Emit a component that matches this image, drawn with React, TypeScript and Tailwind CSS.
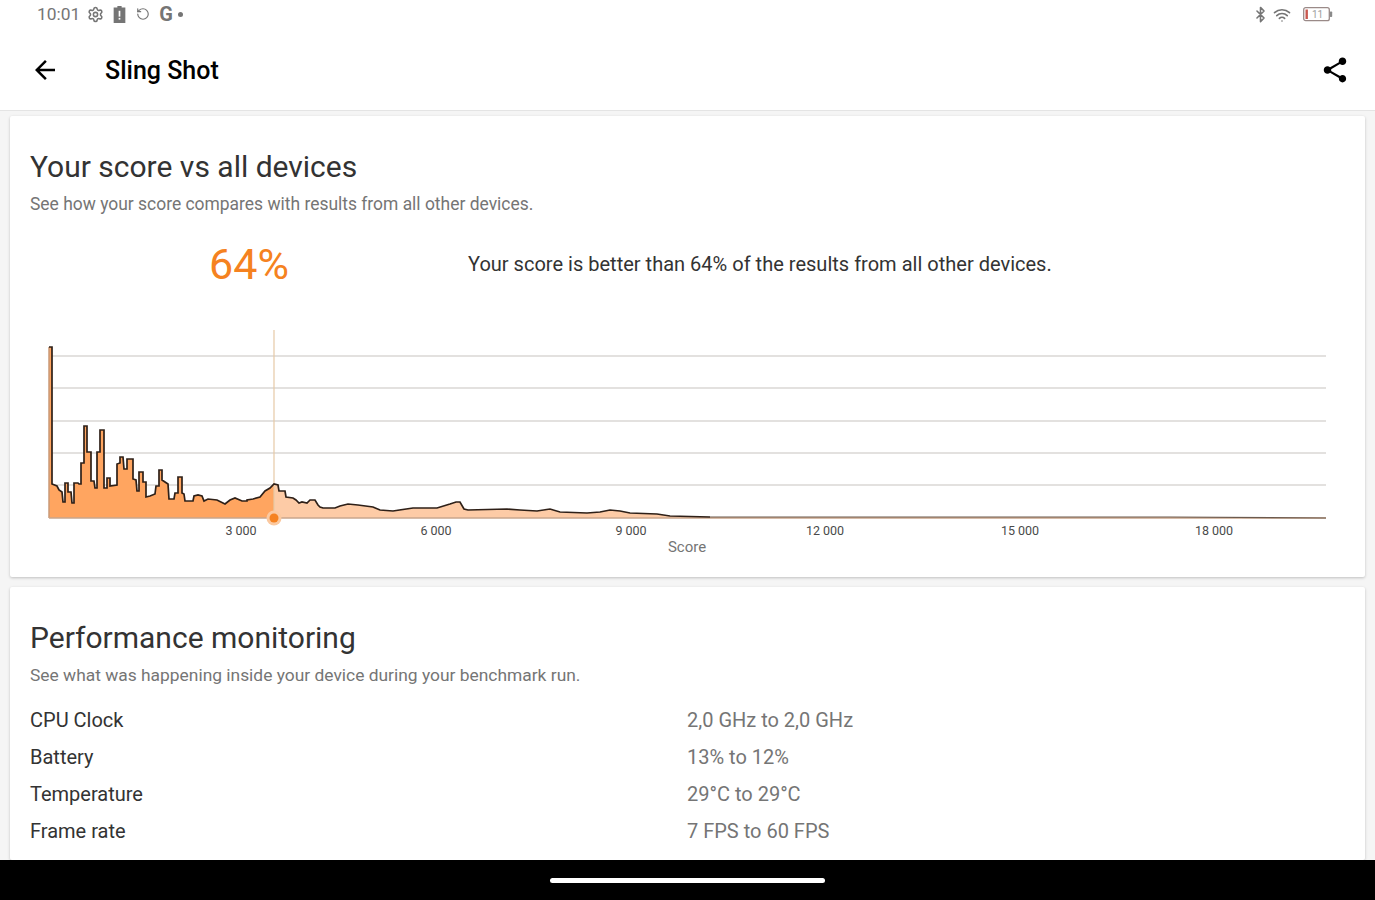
import React from "react";
import { Settings, RotateCcw, Bluetooth, Wifi } from "lucide-react";

// curve traced from the reference, page coordinates
const left: [number, number][] = [
  [49, 518], [49, 347], [52, 347], [52, 484], [57, 486], [59, 490], [62, 492], [63, 502], [65, 502], [65, 483],
  [68, 483], [68, 492], [71, 492], [72, 503], [74, 503], [74, 483], [78, 483], [79, 484], [81, 484], [81, 463],
  [84, 463], [84, 426], [87, 426], [87, 452], [91, 452], [91, 481], [94, 481], [95, 488], [97, 488], [97, 452],
  [100, 452], [100, 430], [104, 430], [104, 488], [107, 488], [107, 478], [110, 478], [110, 486], [117, 485],
  [117, 464], [120, 463], [120, 457], [123, 457], [124, 469], [127, 469], [127, 459], [133, 459], [133, 479],
  [136, 480], [137, 491], [139, 491], [139, 472], [143, 472], [143, 482], [146, 482], [146, 497], [150, 496],
  [155, 494], [156, 486], [159, 486], [159, 470], [162, 470], [162, 480], [165, 482], [168, 484], [169, 499],
  [174, 499], [175, 493], [178, 493], [178, 477], [182, 477], [182, 493], [184, 494], [185, 501], [193, 501],
  [194, 496], [198, 495], [202, 496], [204, 501], [208, 499], [217, 500], [225, 504], [230, 500], [235, 498],
  [242, 501], [247, 501], [247, 500], [253, 499], [260, 497], [265, 491], [270, 488], [274, 484],
];
const right: [number, number][] = [
  [274, 484], [278, 485], [279, 491], [285, 491], [286, 497], [293, 498], [296, 500], [299, 503], [302, 502],
  [307, 503], [310, 500], [315, 500], [318, 505], [320, 507], [323, 508], [335, 508], [340, 506], [348, 504],
  [358, 505], [373, 507], [380, 510], [393, 511], [413, 508], [437, 508], [450, 504], [456, 502], [460, 502],
  [464, 509], [468, 510], [507, 509], [520, 510], [537, 511], [550, 509], [560, 512], [587, 513], [600, 512],
  [610, 510], [620, 511], [630, 513], [657, 514], [670, 516], [710, 517], [810, 517], [1170, 517], [1326, 518],
];
const toPoints = (pts: [number, number][]) => pts.map(p => p.join(",")).join(" ");

const gridLines = [356, 388, 421, 453, 485];
const ticks = [
  { x: 241, label: "3 000" },
  { x: 436, label: "6 000" },
  { x: 631, label: "9 000" },
  { x: 825, label: "12 000" },
  { x: 1020, label: "15 000" },
  { x: 1214, label: "18 000" },
];
const perf = [
  { name: "CPU Clock", value: "2,0 GHz to 2,0 GHz" },
  { name: "Battery", value: "13% to 12%" },
  { name: "Temperature", value: "29°C to 29°C" },
  { name: "Frame rate", value: "7 FPS to 60 FPS" },
];

const ScoreChart = () => (
  <svg viewBox="10 325 1355 235" className="block w-[1355px] h-[235px]">
    {gridLines.map(y => (
      <line key={y} x1={49} x2={1326} y1={y} y2={y} stroke="#c8c3bf" strokeWidth={1.2} />
    ))}
    <polygon points={toPoints([...left, [274, 518]])} fill="#ffa560" />
    <polygon points={toPoints([...right, [274, 518]])} fill="#fdcba6" />
    <line x1={274} x2={274} y1={330} y2={518} stroke="#e6c9a6" strokeWidth={1.2} />
    <line x1={49} x2={49} y1={347} y2={518} stroke="#c89a78" strokeWidth={1.5} />
    <line x1={49} x2={1326} y1={518} y2={518} stroke="#c9a68c" strokeWidth={1.5} />
    <polyline points={toPoints([...left.slice(1), ...right.slice(0, -3)])} fill="none" stroke="#2e2018" strokeWidth={1.7} />
    <polyline points={toPoints(right.slice(-4))} fill="none" stroke="#6b5a4e" strokeWidth={1.2} />
    <circle cx={274} cy={518} r={7.5} fill="#fbc9a0" />
    <circle cx={274} cy={518} r={4.5} fill="#f58220" />
    {ticks.map(t => (
      <text key={t.x} x={t.x} y={535} textAnchor="middle" fontSize={12.5} fill="#4a4a4a">{t.label}</text>
    ))}
    <text x={687} y={552} textAnchor="middle" fontSize={15} fill="#757575">Score</text>
  </svg>
);

const StatusBar = () => (
  <div className="h-[31px] pb-[2px] flex items-center justify-between pl-[37px] pr-[42px] text-[#757575] shrink-0">
    <div className="flex items-center">
      <span className="text-[17.4px]">10:01</span>
      <Settings size={17} strokeWidth={2.2} className="ml-[7px]" />
      <svg viewBox="0 0 12 16" className="w-[13px] h-[17px] ml-[9px]" fill="#757575">
        <path d="M4 0h4v1.5h3.5V16H.5V1.5H4z" />
        <rect x="5.2" y="4.5" width="1.6" height="5.5" fill="#fff" />
        <rect x="5.2" y="11.2" width="1.6" height="1.6" fill="#fff" />
      </svg>
      <RotateCcw size={14} strokeWidth={2} className="ml-[10px]" />
      <span className="ml-[9px] font-bold text-[20px] leading-none">G</span>
      <span className="ml-[5px] w-[5px] h-[5px] rounded-full bg-[#757575]" />
    </div>
    <div className="flex items-center">
      <Bluetooth size={17} strokeWidth={2.2} />
      <Wifi size={18} strokeWidth={2.2} className="ml-[4px]" />
      <svg viewBox="0 0 30 15" className="w-[30px] h-[15px] ml-[12px]">
        <rect x="0.7" y="0.7" width="25.6" height="13" rx="2" fill="none" stroke="#9a8a88" strokeWidth="1.3" />
        <rect x="2.5" y="2.5" width="2.4" height="9.5" fill="#c9584f" />
        <rect x="26.8" y="4.5" width="2.4" height="5.5" rx="0.8" fill="#8a8a8a" />
        <text x="14.5" y="11" textAnchor="middle" fontSize="10" fill="#9e9e9e">11</text>
      </svg>
    </div>
  </div>
);

const Toolbar = () => (
  <div className="h-[80px] flex items-center justify-between pl-[30px] pr-[25px] bg-white border-b border-[#e4e4e4] shrink-0">
    <div className="flex items-center">
      <svg viewBox="0 0 24 24" className="w-[30px] h-[30px] mb-[2px]" fill="#000">
        <path d="M20 11H7.83l5.59-5.59L12 4l-8 8 8 8 1.41-1.41L7.83 13H20v-2z" />
      </svg>
      <span className="ml-[45px] text-[25px] font-medium text-black">Sling Shot</span>
    </div>
    <svg viewBox="0 0 24 24" className="w-[30px] h-[30px] mb-[2px]" fill="#000">
      <path d="M18 16.08c-.76 0-1.44.3-1.96.77L8.91 12.7c.05-.23.09-.46.09-.7s-.04-.47-.09-.7l7.05-4.11c.54.5 1.25.81 2.04.81 1.66 0 3-1.34 3-3s-1.34-3-3-3-3 1.34-3 3c0 .24.04.47.09.7L8.04 9.81C7.5 9.31 6.79 9 6 9c-1.66 0-3 1.34-3 3s1.34 3 3 3c.79 0 1.5-.31 2.04-.81l7.12 4.16c-.05.21-.08.43-.08.65 0 1.61 1.31 2.92 2.92 2.92s2.92-1.31 2.92-2.92-1.31-2.92-2.92-2.92z" />
    </svg>
  </div>
);

export default function App() {
  return (
    <div className="h-screen flex flex-col overflow-hidden bg-[#f5f5f5] font-['Roboto',sans-serif]">
      <div className="bg-white shrink-0">
        <StatusBar />
        <Toolbar />
      </div>
      <main className="flex-1 overflow-hidden px-[10px] pt-[5px] flex flex-col gap-[10px]">
        <section className="bg-white rounded-[2px] shadow-[0_1px_3px_rgba(0,0,0,0.22)] h-[461px] shrink-0">
          <div className="px-[20px] pt-[32px]">
            <h2 className="text-[30px] leading-[38px] text-[#333333]">Your score vs all devices</h2>
            <p className="mt-[6px] text-[17.45px] leading-[24px] text-[#757575]">See how your score compares with results from all other devices.</p>
            <div className="flex items-center mt-[18px] h-[60px]">
              <div className="w-[438px] text-center text-[43px] text-[#f58220]">64%</div>
              <div className="text-[20.05px] text-[#333333]">Your score is better than 64% of the results from all other devices.</div>
            </div>
          </div>
          <div className="mt-[31px]">
            <ScoreChart />
          </div>
        </section>
        <section className="bg-white rounded-[2px] shadow-[0_1px_3px_rgba(0,0,0,0.22)] flex-1 px-[20px] pt-[32px]">
          <h2 className="text-[30px] leading-[38px] text-[#333333]">Performance monitoring</h2>
          <p className="mt-[6px] text-[17.4px] leading-[24px] text-[#757575]">See what was happening inside your device during your benchmark run.</p>
          <div className="mt-[14px]">
            {perf.map(row => (
              <div key={row.name} className="grid grid-cols-[657px_1fr] h-[37px] items-center text-[20px]">
                <span className="text-[#333333]">{row.name}</span>
                <span className="text-[#757575]">{row.value}</span>
              </div>
            ))}
          </div>
        </section>
      </main>
      <div className="h-[40px] bg-black flex items-center justify-center shrink-0">
        <div className="w-[275px] h-[5px] rounded-full bg-white" />
      </div>
    </div>
  );
}
